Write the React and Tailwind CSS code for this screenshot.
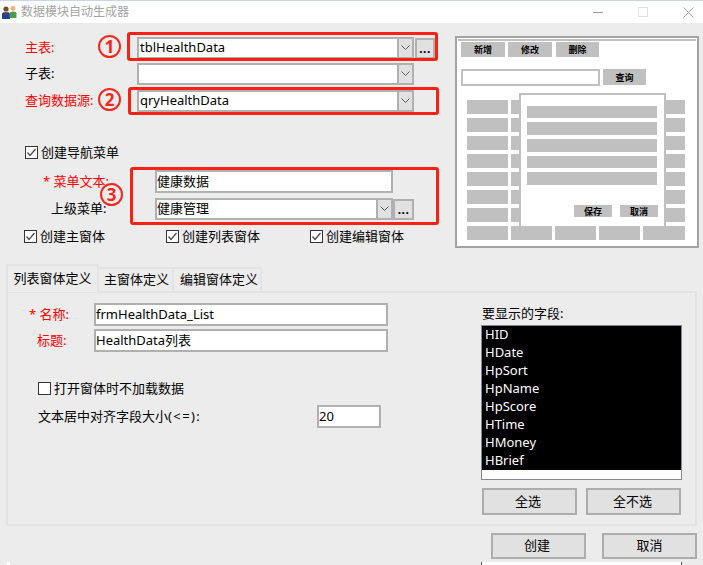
import React from "react";

const FONT = "font-['Segoe_UI','Noto_Sans','Noto_Sans_CJK_SC',sans-serif]";

function Chevron() {
  return (
    <svg width="9" height="6" viewBox="0 0 9 6" fill="none" stroke="#5a5a5a" strokeWidth="1">
      <path d="M0.5 0.5 L4.5 4.5 L8.5 0.5" />
    </svg>
  );
}

function Combo({ value, className = "", pad = "pl-[1px]" }) {
  return (
    <div className={`flex h-[22px] border-2 border-[#b0b0b0] bg-white ${className}`}>
      <div className={`flex-1 text-[13px] leading-[17px] text-black ${pad}`}>{value}</div>
      <div className="flex w-[15px] items-center justify-center bg-[#e1e1e1] border-l-2 border-[#b0b0b0]">
        <Chevron />
      </div>
    </div>
  );
}

function Dots({ className = "" }) {
  return (
    <div className={`flex items-center justify-center border-2 border-[#b0b0b0] bg-[#e1e1e1] text-[12px] font-bold leading-none tracking-[0.5px] text-black ${className}`}>
      <span className="mt-[1px]">...</span>
    </div>
  );
}

function Check({ checked, label, className = "" }) {
  return (
    <div className={`flex items-center ${className}`}>
      <div className="flex h-[13px] w-[13px] shrink-0 items-center justify-center border border-[#333] bg-white">
        {checked && (
          <svg width="11" height="11" viewBox="0 0 11 11" fill="none" stroke="#444" strokeWidth="1.2">
            <path d="M1.5 5.5 L4 8.5 L9.5 2" />
          </svg>
        )}
      </div>
      <span className="ml-[3px] text-[13px] leading-[16px] text-black">{label}</span>
    </div>
  );
}

function Field({ value, className = "" }) {
  return (
    <div className={`h-[23px] border-2 border-[#b0b0b0] bg-white text-[13px] leading-[19px] text-black ${className}`}>
      {value}
    </div>
  );
}

function Btn({ children, className = "" }) {
  return (
    <div className={`flex items-center justify-center border-2 border-[#adadad] bg-[#e1e1e1] text-[13px] text-black ${className}`}>
      {children}
    </div>
  );
}

function Mini({ children, className = "" }) {
  return (
    <div className={`flex items-center justify-center bg-[#c0c0c0] text-[9px] font-bold leading-none text-black ${className}`}>
      {children}
    </div>
  );
}

function Circle({ n, className = "" }) {
  return (
    <div className={`absolute flex h-[23px] w-[23px] items-center justify-center rounded-full border-2 border-[#f5261c] text-[17px] font-bold leading-none text-[#f5261c] ${className}`}>
      {n}
    </div>
  );
}

function Preview() {
  const rows = [0, 1, 2, 3, 4, 5, 6, 7];
  return (
    <div className="relative mt-[13px] h-[212px] w-[244px] border-2 border-[#a3a3a3] bg-white p-[1px]">
      <div className="h-full border-t-[2px] border-[#c0c0c0] px-[3px] pt-[1px]">
        <div className="flex">
          <Mini className="h-[15px] w-[44px]">新增</Mini>
          <Mini className="ml-[3px] h-[15px] w-[44px]">修改</Mini>
          <Mini className="ml-[4px] h-[15px] w-[43px]">删除</Mini>
        </div>
        <div className="mt-[12px] flex">
          <div className="h-[17px] w-[139px] border-[2px] border-[#c0c0c0] bg-white" />
          <Mini className="ml-[3px] h-[16px] w-[43px]">查询</Mini>
        </div>
        <div className="ml-[6px] mt-[14px] flex w-[220px] flex-col gap-[4px]">
          {rows.map((i) => (
            <div key={i} className="flex h-[14px] gap-[3px]">
              <div className="w-[41px] bg-[#c0c0c0]" />
              <div className="w-[41px] bg-[#c0c0c0]" />
              <div className="w-[41px] bg-[#c0c0c0]" />
              <div className="w-[41px] bg-[#c0c0c0]" />
              <div className="w-[42px] bg-[#c0c0c0]" />
            </div>
          ))}
        </div>
      </div>
      <div className="absolute left-[62px] top-[55px] h-[133px] w-[147px] border-2 border-[#c0c0c0] border-b-0 bg-white px-[6px] pt-[11px]">
        <div className="flex flex-col gap-[4px]">
          <div className="h-[12px] w-[130px] bg-[#c0c0c0]" />
          <div className="h-[13px] w-[130px] bg-[#c0c0c0]" />
          <div className="h-[13px] w-[130px] bg-[#c0c0c0]" />
          <div className="h-[12px] w-[130px] bg-[#c0c0c0]" />
          <div className="h-[13px] w-[130px] bg-[#c0c0c0]" />
        </div>
        <div className="mt-[20px] flex justify-end gap-[8px]">
          <Mini className="h-[12px] w-[38px]">保存</Mini>
          <Mini className="h-[12px] w-[38px]">取消</Mini>
        </div>
      </div>
    </div>
  );
}

function TitleIcon() {
  return (
    <svg width="16" height="15" viewBox="0 0 16 15">
      <circle cx="5" cy="4" r="2.6" fill="#7a4a20" />
      <path d="M1 14 V9 Q1 7 5 7 Q9 7 9 9 V14 Z" fill="#23408f" />
      <path d="M4 7 L5 11 L6 7 Z" fill="#c33" />
      <circle cx="12" cy="3.4" r="2.4" fill="#f0b070" />
      <path d="M8.5 13 V8.5 Q8.5 6.4 12 6.4 Q15.5 6.4 15.5 8.5 V13 Z" fill="#4d9a4d" />
    </svg>
  );
}

export default function App() {
  const fields = ["HID", "HDate", "HpSort", "HpName", "HpScore", "HTime", "HMoney", "HBrief"];
  return (
    <div className={`relative h-[565px] w-[703px] overflow-hidden bg-[#ececec] ${FONT}`}>
      {/* title bar */}
      <div className="flex h-[23px] items-center border-t border-[#c9d4e6] bg-white pl-[1px]">
        <TitleIcon />
        <span className="ml-[4px] text-[12px] text-[#a3a3a3]">数据模块自动生成器</span>
        <div className="ml-auto flex items-center">
          <div className="h-[1px] w-[10px] bg-[#9a9a9a]" />
          <div className="ml-[35px] h-[10px] w-[10px] border border-[#e0e0e0]" />
          <svg className="ml-[35px] mr-[9px]" width="11" height="11" viewBox="0 0 11 11" stroke="#8a8a8a" strokeWidth="0.8">
            <path d="M0.5 0.5 L10.5 10.5 M10.5 0.5 L0.5 10.5" />
          </svg>
        </div>
      </div>

      {/* top area */}
      <div className="flex">
        <div className="w-[455px]">
          <div className="mt-[14px] flex items-center">
            <span className="ml-[25px] w-[112px] text-[13px] text-[#ff0000]">主表:</span>
            <Combo value="tblHealthData" className="w-[277px]" />
            <Dots className="ml-[1px] h-[21px] w-[20px]" />
          </div>
          <div className="mt-[4px] flex items-center">
            <span className="ml-[25px] w-[112px] text-[13px] text-black">子表:</span>
            <Combo value="" className="w-[277px]" />
          </div>
          <div className="mt-[5px] flex items-center">
            <span className="ml-[25px] w-[112px] text-[13px] text-[#ff0000]">查询数据源:</span>
            <Combo value="qryHealthData" className="w-[277px]" />
          </div>
          <Check checked label="创建导航菜单" className="ml-[25px] mt-[32px]" />
          <div className="mt-[10px] flex items-center">
            <span className="ml-[43px] w-[112px] text-[13px] text-[#ff0000]">* 菜单文本:</span>
            <Field value="健康数据" className="w-[238px]" />
          </div>
          <div className="mt-[5px] flex items-center">
            <span className="ml-[51px] w-[104px] text-[13px] text-black">上级菜单:</span>
            <Combo value="健康管理" pad="pl-0" className="w-[238px]" />
            <Dots className="h-[21px] w-[21px]" />
          </div>
          <div className="mt-[8px] flex">
            <Check checked label="创建主窗体" className="ml-[24px] w-[142px]" />
            <Check checked label="创建列表窗体" className="w-[144px]" />
            <Check checked label="创建编辑窗体" />
          </div>
        </div>
        <Preview />
      </div>

      {/* tabs */}
      <div className="ml-[6px] mt-[16px] flex h-[27px] items-end">
        <div className="relative z-10 -mb-[1px] flex h-[28px] w-[93px] items-center justify-center border-2 border-b-0 border-[#e3e3e3] bg-[#ececec] text-[13px] text-black">
          列表窗体定义
        </div>
        <div className="flex h-[24px] w-[75px] items-center justify-center border-2 border-b-0 border-l-0 border-[#e3e3e3] pl-[2px] text-[13px] text-black">
          主窗体定义
        </div>
        <div className="flex h-[24px] w-[88px] items-center justify-center border-2 border-b-0 border-l-0 border-[#e3e3e3] pl-[4px] text-[13px] text-black">
          编辑窗体定义
        </div>
      </div>

      {/* tab panel */}
      <div className="ml-[6px] flex h-[235px] w-[691px] border-2 border-[#e3e3e3]">
        <div className="w-[473px] shrink-0">
          <div className="mt-[10px] flex items-center">
            <span className="ml-[21px] w-[65px] text-[13px] text-[#ff0000]">* 名称:</span>
            <Field value="frmHealthData_List" className="w-[294px]" />
          </div>
          <div className="mt-[3px] flex items-center">
            <span className="ml-[29px] w-[57px] text-[13px] text-[#ff0000]">标题:</span>
            <Field value="HealthData列表" className="w-[294px]" />
          </div>
          <Check label="打开窗体时不加载数据" className="ml-[30px] mt-[28px]" />
          <div className="mt-[9px] flex items-center">
            <span className="ml-[30px] w-[279px] text-[13px] text-black">
              文本居中对齐字段大小<span className="tracking-[1.4px]">(&lt;=):</span>
            </span>
            <Field value="20" className="w-[64px]" />
          </div>
        </div>
        <div className="w-[201px]">
          <div className="mt-[11px] pl-[1px] text-[13px] leading-[18px] text-black">要显示的字段:</div>
          <div className="mt-[3px] h-[155px] border border-[#828790] bg-white">
            <div className="bg-black">
              {fields.map((f) => (
                <div key={f} className="h-[18px] pl-[3px] text-[13px] leading-[16px] text-white">{f}</div>
              ))}
            </div>
          </div>
          <div className="mt-[8px] flex justify-between pl-[1px] pr-[1px]">
            <Btn className="h-[27px] w-[95px] pr-[3px]">全选</Btn>
            <Btn className="h-[27px] w-[95px] pr-[2px]">全不选</Btn>
          </div>
        </div>
      </div>

      {/* footer */}
      <div className="mt-[7px] flex justify-end gap-[16px] pr-[6px]">
        <Btn className="h-[26px] w-[95px] pr-[3px]">创建</Btn>
        <Btn className="h-[26px] w-[95px]">取消</Btn>
      </div>

      {/* sliver of the window behind, at the bottom edge */}
      <div className="mt-[3px] flex h-[3px]">
        <div className="ml-[7px] w-[3px] bg-white" />
        <div className="ml-[471px] w-[201px] border-x border-[#555] bg-white" />
      </div>

      {/* annotations over the form */}
      <div className="absolute left-[127px] top-[32px] h-[29px] w-[311px] rounded-[3px] border-[3px] border-[#fb2014]" />
      <div className="absolute left-[128px] top-[87px] h-[28px] w-[311px] rounded-[3px] border-[3px] border-[#fb2014]" />
      <div className="absolute left-[130px] top-[167px] h-[58px] w-[309px] rounded-[3px] border-[3px] border-[#fb2014]" />
      <Circle n="1" className="left-[98px] top-[35px]" />
      <Circle n="2" className="left-[98px] top-[88px]" />
      <Circle n="3" className="left-[100px] top-[183px]" />
    </div>
  );
}
